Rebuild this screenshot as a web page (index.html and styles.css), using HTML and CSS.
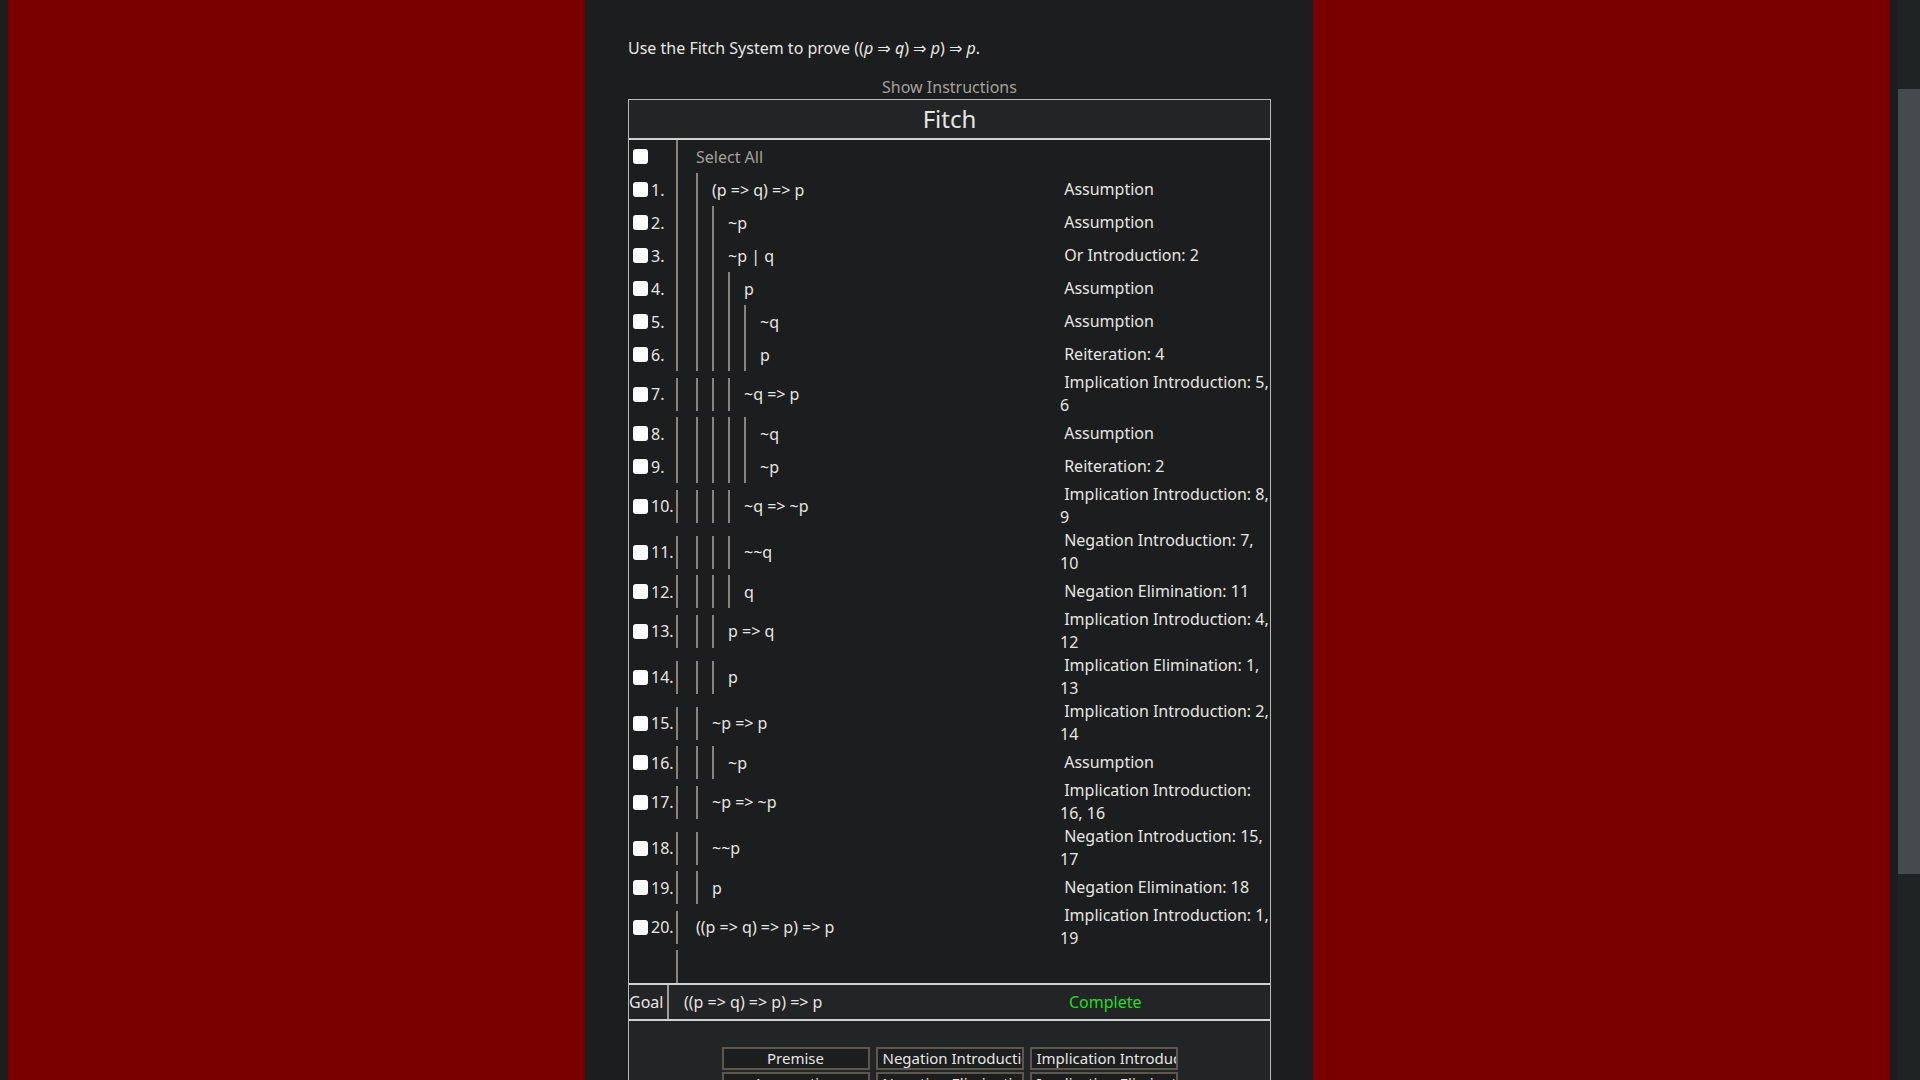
FILE: index.html
```html
<!DOCTYPE html>
<html lang="en">
<head>
<meta charset="utf-8">
<title>Fitch</title>
<link rel="stylesheet" href="styles.css">
</head>
<body>
<div class="page">
  <main class="panel">
    <p class="intro">Use the Fitch System to prove ((<i>p</i> ⇒ <i>q</i>) ⇒ <i>p</i>) ⇒ <i>p</i>.</p>
    <div class="show">Show Instructions</div>
    <section class="fitch">
      <div class="fitch-title">Fitch</div>
      <div class="proof">
        <div class="row">
          <div class="num"><input type="checkbox" class="cb"></div>
          <div class="formula"><span class="txt select">Select All</span></div>
          <div class="rule"></div>
        </div>

        <div class="row">
          <div class="num"><input type="checkbox" class="cb"><span class="n">1.</span></div>
          <div class="formula"><span class="b"><span class="txt">(p =&gt; q) =&gt; p</span></span></div>
          <div class="rule">&nbsp;Assumption</div>
        </div>
        <div class="row">
          <div class="num"><input type="checkbox" class="cb"><span class="n">2.</span></div>
          <div class="formula"><span class="b"><span class="b"><span class="txt">~p</span></span></span></div>
          <div class="rule">&nbsp;Assumption</div>
        </div>
        <div class="row">
          <div class="num"><input type="checkbox" class="cb"><span class="n">3.</span></div>
          <div class="formula"><span class="b"><span class="b"><span class="txt">~p | q</span></span></span></div>
          <div class="rule">&nbsp;Or Introduction: 2</div>
        </div>
        <div class="row">
          <div class="num"><input type="checkbox" class="cb"><span class="n">4.</span></div>
          <div class="formula"><span class="b"><span class="b"><span class="b"><span class="txt">p</span></span></span></span></div>
          <div class="rule">&nbsp;Assumption</div>
        </div>
        <div class="row">
          <div class="num"><input type="checkbox" class="cb"><span class="n">5.</span></div>
          <div class="formula"><span class="b"><span class="b"><span class="b"><span class="b"><span class="txt">~q</span></span></span></span></span></div>
          <div class="rule">&nbsp;Assumption</div>
        </div>
        <div class="row">
          <div class="num"><input type="checkbox" class="cb"><span class="n">6.</span></div>
          <div class="formula"><span class="b"><span class="b"><span class="b"><span class="b"><span class="txt">p</span></span></span></span></span></div>
          <div class="rule">&nbsp;Reiteration: 4</div>
        </div>
        <div class="row">
          <div class="num"><input type="checkbox" class="cb"><span class="n">7.</span></div>
          <div class="formula"><span class="b"><span class="b"><span class="b"><span class="txt">~q =&gt; p</span></span></span></span></div>
          <div class="rule">&nbsp;Implication Introduction: 5, 6</div>
        </div>
        <div class="row">
          <div class="num"><input type="checkbox" class="cb"><span class="n">8.</span></div>
          <div class="formula"><span class="b"><span class="b"><span class="b"><span class="b"><span class="txt">~q</span></span></span></span></span></div>
          <div class="rule">&nbsp;Assumption</div>
        </div>
        <div class="row">
          <div class="num"><input type="checkbox" class="cb"><span class="n">9.</span></div>
          <div class="formula"><span class="b"><span class="b"><span class="b"><span class="b"><span class="txt">~p</span></span></span></span></span></div>
          <div class="rule">&nbsp;Reiteration: 2</div>
        </div>
        <div class="row">
          <div class="num"><input type="checkbox" class="cb"><span class="n">10.</span></div>
          <div class="formula"><span class="b"><span class="b"><span class="b"><span class="txt">~q =&gt; ~p</span></span></span></span></div>
          <div class="rule">&nbsp;Implication Introduction: 8, 9</div>
        </div>
        <div class="row">
          <div class="num"><input type="checkbox" class="cb"><span class="n">11.</span></div>
          <div class="formula"><span class="b"><span class="b"><span class="b"><span class="txt">~~q</span></span></span></span></div>
          <div class="rule">&nbsp;Negation Introduction: 7, 10</div>
        </div>
        <div class="row">
          <div class="num"><input type="checkbox" class="cb"><span class="n">12.</span></div>
          <div class="formula"><span class="b"><span class="b"><span class="b"><span class="txt">q</span></span></span></span></div>
          <div class="rule">&nbsp;Negation Elimination: 11</div>
        </div>
        <div class="row">
          <div class="num"><input type="checkbox" class="cb"><span class="n">13.</span></div>
          <div class="formula"><span class="b"><span class="b"><span class="txt">p =&gt; q</span></span></span></div>
          <div class="rule">&nbsp;Implication Introduction: 4, 12</div>
        </div>
        <div class="row">
          <div class="num"><input type="checkbox" class="cb"><span class="n">14.</span></div>
          <div class="formula"><span class="b"><span class="b"><span class="txt">p</span></span></span></div>
          <div class="rule">&nbsp;Implication Elimination: 1, 13</div>
        </div>
        <div class="row">
          <div class="num"><input type="checkbox" class="cb"><span class="n">15.</span></div>
          <div class="formula"><span class="b"><span class="txt">~p =&gt; p</span></span></div>
          <div class="rule">&nbsp;Implication Introduction: 2, 14</div>
        </div>
        <div class="row">
          <div class="num"><input type="checkbox" class="cb"><span class="n">16.</span></div>
          <div class="formula"><span class="b"><span class="b"><span class="txt">~p</span></span></span></div>
          <div class="rule">&nbsp;Assumption</div>
        </div>
        <div class="row">
          <div class="num"><input type="checkbox" class="cb"><span class="n">17.</span></div>
          <div class="formula"><span class="b"><span class="txt">~p =&gt; ~p</span></span></div>
          <div class="rule">&nbsp;Implication Introduction: 16, 16</div>
        </div>
        <div class="row">
          <div class="num"><input type="checkbox" class="cb"><span class="n">18.</span></div>
          <div class="formula"><span class="b"><span class="txt">~~p</span></span></div>
          <div class="rule">&nbsp;Negation Introduction: 15, 17</div>
        </div>
        <div class="row">
          <div class="num"><input type="checkbox" class="cb"><span class="n">19.</span></div>
          <div class="formula"><span class="b"><span class="txt">p</span></span></div>
          <div class="rule">&nbsp;Negation Elimination: 18</div>
        </div>
        <div class="row">
          <div class="num"><input type="checkbox" class="cb"><span class="n">20.</span></div>
          <div class="formula"><span class="txt">((p =&gt; q) =&gt; p) =&gt; p</span></div>
          <div class="rule">&nbsp;Implication Introduction: 1, 19</div>
        </div>
        <div class="row">
          <div class="num"></div>
          <div class="formula"></div>
          <div class="rule"></div>
        </div>
      </div>
      <div class="goal">
        <div class="goal-label">Goal</div>
        <div class="goal-formula">((p =&gt; q) =&gt; p) =&gt; p</div>
        <div class="goal-status">Complete</div>
      </div>
      <div class="actions">
        <button class="btn">Premise</button>
        <button class="btn">Negation Introduction</button>
        <button class="btn">Implication Introduction</button>
        <button class="btn">Assumption</button>
        <button class="btn">Negation Elimination</button>
        <button class="btn">Implication Elimination</button>
        <button class="btn">Reiteration</button>
        <button class="btn">And Introduction</button>
        <button class="btn">Or Introduction</button>
      </div>
    </section>
  </main>
</div>
<div class="scrollbar"><div class="thumb"></div></div>
</body>
</html>
```
FILE: styles.css
```css
html {
  background: #1b1d1e;
  overflow: hidden;
}
body {
  margin: 0 30px 0 8px;
  font-family: "Noto Sans", "Open Sans", "DejaVu Sans", sans-serif;
  font-size: 16px;
  color: #e8e6e3;
}
.page {
  background: #7a0000;
  min-height: 1600px;
}
.panel {
  width: 728px;
  margin: 0 auto;
  box-sizing: border-box;
  min-height: 1600px;
  background: #1b1d1e;
  padding: 37px 42px 0 43px;
}
.intro {
  margin: 0;
  line-height: 22px;
}
.intro i {
  font-style: italic;
}
.show {
  margin-top: 17px;
  line-height: 22px;
  text-align: center;
  color: #a6a19a;
}
.fitch {
  margin-top: 1px;
  border: 1px solid #b9b9b9;
  background: #222426;
}
.fitch-title {
  height: 38px;
  line-height: 38px;
  text-align: center;
  font-size: 24px;
  border-bottom: 2px solid #d2d2d2;
  background: #222426;
}
.proof {
  background: #1b1d1e;
}
.row {
  display: flex;
  align-items: center;
  min-height: 33px;
}
.num {
  flex: 0 0 47px;
  box-sizing: border-box;
  height: 33px;
  display: flex;
  align-items: center;
  padding-left: 4px;
}
.cb {
  appearance: none;
  -webkit-appearance: none;
  width: 15px;
  height: 15px;
  margin: 0 3px 0 0;
  background: #ffffff;
  border-radius: 3px;
  flex: none;
}
.n {
  line-height: 22px;
  white-space: nowrap;
}
.formula {
  flex: 1 1 auto;
  height: 33px;
  display: flex;
  align-items: stretch;
  border-left: 2px solid #8b8278;
  padding-left: 18px;
  box-sizing: border-box;
}
.b {
  display: flex;
  align-items: stretch;
  border-left: 2px solid #8b8278;
  padding-left: 14px;
}
.txt {
  display: flex;
  align-items: center;
  white-space: nowrap;
}
.select {
  color: #a6a19a;
}
.rule {
  flex: 0 0 210px;
  line-height: 23px;
}
.goal {
  display: flex;
  align-items: stretch;
  height: 34px;
  border-top: 2px solid #d2d2d2;
  border-bottom: 2px solid #d2d2d2;
  background: #222426;
  line-height: 34px;
}
.goal-label {
  flex: 0 0 40px;
  border-right: 2px solid #9c9c9c;
  box-sizing: border-box;
}
.goal-formula {
  flex: 1 1 auto;
  padding-left: 15px;
}
.goal-status {
  flex: 0 0 210px;
  box-sizing: border-box;
  padding-left: 9px;
  color: #22dd22;
}
.actions {
  display: grid;
  grid-template-columns: repeat(3, 148px);
  column-gap: 6px;
  row-gap: 2px;
  justify-content: center;
  padding: 26px 0 30px;
}
.btn {
  height: 23px;
  box-sizing: border-box;
  border: 2px solid #5d574f;
  background: #1b1d1e;
  color: #e8e6e3;
  font-family: "Noto Sans", "Open Sans", sans-serif;
  font-size: 15px;
  line-height: 19px;
  padding: 0 5px;
  text-align: center;
  white-space: nowrap;
  overflow: hidden;
  border-radius: 0;
}
.scrollbar {
  position: fixed;
  top: 0;
  right: 0;
  width: 22px;
  height: 100vh;
  background: #202324;
}
.thumb {
  margin-top: 89px;
  height: 785px;
  background: #454a4d;
}
```
